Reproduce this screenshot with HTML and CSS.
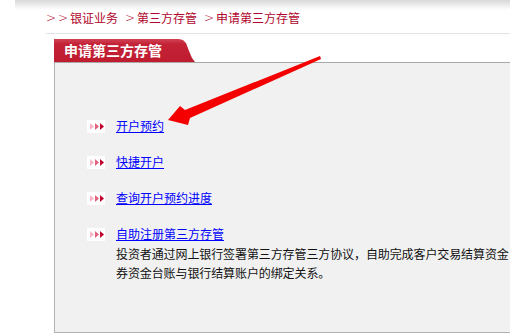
FILE: index.html
```html
<!DOCTYPE html>
<html>
<head>
<meta charset="utf-8">
<link rel="stylesheet" href="styles.css">
</head>
<body>
<div class="topbar"></div>
<div class="wrap">
  <div class="crumbs">
    <span class="chev">&gt;</span><span class="chev">&gt;</span><span class="seg">银证业务</span><span class="chev">&gt;</span><span class="seg">第三方存管</span><span class="chev">&gt;</span><span class="seg">申请第三方存管</span>
  </div>
  <div class="rule"></div>
  <div class="box">
    <div class="tab">申请第三方存管</div>
    <div class="panel">
      <ul class="list">
        <li class="item">
          <svg class="bullet" viewBox="0 0 18 13"><rect width="18" height="13" fill="#fff"/><path d="M3 3l4 3.5-4 3.5z" fill="#f6b8c6"/><path d="M8 3l4 3.5-4 3.5z" fill="#e2607e"/><path d="M13 3l4 3.5-4 3.5z" fill="#c0002a"/></svg>
          <div class="body"><a href="#">开户预约</a></div>
        </li>
        <li class="item">
          <svg class="bullet" viewBox="0 0 18 13"><rect width="18" height="13" fill="#fff"/><path d="M3 3l4 3.5-4 3.5z" fill="#f6b8c6"/><path d="M8 3l4 3.5-4 3.5z" fill="#e2607e"/><path d="M13 3l4 3.5-4 3.5z" fill="#c0002a"/></svg>
          <div class="body"><a href="#">快捷开户</a></div>
        </li>
        <li class="item">
          <svg class="bullet" viewBox="0 0 18 13"><rect width="18" height="13" fill="#fff"/><path d="M3 3l4 3.5-4 3.5z" fill="#f6b8c6"/><path d="M8 3l4 3.5-4 3.5z" fill="#e2607e"/><path d="M13 3l4 3.5-4 3.5z" fill="#c0002a"/></svg>
          <div class="body"><a href="#">查询开户预约进度</a></div>
        </li>
        <li class="item">
          <svg class="bullet" viewBox="0 0 18 13"><rect width="18" height="13" fill="#fff"/><path d="M3 3l4 3.5-4 3.5z" fill="#f6b8c6"/><path d="M8 3l4 3.5-4 3.5z" fill="#e2607e"/><path d="M13 3l4 3.5-4 3.5z" fill="#c0002a"/></svg>
          <div class="body"><a href="#">自助注册第三方存管</a>
            <p class="desc"><span class="line">投资者通过网上银行签署第三方存管三方协议，自助完成客户交易结算资金</span><span class="line">券资金台账与银行结算账户的绑定关系。</span></p>
          </div>
        </li>
      </ul>
    </div>
  </div>
</div>
<svg class="arrow" width="525" height="334" viewBox="0 0 525 334"><polygon points="168,120 180,106 185,110 320,56 321,59 190,118 188,125" fill="#f40000"/></svg>
</body>
</html>
```
FILE: styles.css
```css
html, body { margin: 0; padding: 0; background: #fff; }
body {
  width: 525px; height: 334px; overflow: hidden; position: relative;
  font-family: "Noto Sans CJK SC", "Noto Sans", sans-serif;
  font-size: 12px;
}
.topbar {
  margin-left: 15px; width: 495px; height: 10px;
  background: linear-gradient(to bottom, #d8d8d8, #f4f4f4 70%, #fff);
}
.wrap { margin-left: 46px; width: 464px; }
.crumbs {
  height: 22px; line-height: 16px; color: #b0062c;
  display: flex;
}
.crumbs .chev { font-family: "DejaVu Sans", sans-serif; font-weight: 200; width: 12px; }
.crumbs .seg { margin-right: 7px; }
.rule { height: 1px; background: #e4e4e4; margin-top: 1px; }
.box { margin-left: 8px; margin-top: 5px; }
.tab {
  width: 131px; height: 23px; line-height: 23px; padding-left: 10px;
  color: #fff; font-weight: bold; font-size: 14px;
  background: linear-gradient(to bottom, #d24456 0, #c42236 5px, #bf1c30 100%);
  clip-path: polygon(0 0, 125px 0, 129px 1px, 132px 4px, 135px 12px, 138px 19px, 141px 23px, 0 23px);
}
.panel {
  height: 269px; background: #f1f1f1;
  border-top: 1px solid #a8a8a8; border-left: 1px solid #b0b0b0; border-bottom: 1px solid #b0b0b0;
  overflow: hidden;
}
.list { list-style: none; margin: 0; padding: 55px 0 0 32px; }
.item { display: flex; align-items: flex-start; gap: 11px; margin-bottom: 20px; }
.bullet { width: 18px; height: 13px; flex: none; margin-top: 2px; }
.body { line-height: 16px; }
.body a { color: #0000ff; text-decoration: underline; }
.desc { margin: 2px 0 0; color: #111; line-height: 19px; }
.line { display: block; white-space: nowrap; letter-spacing: -0.1px; }
.arrow { position: absolute; left: 0; top: 0; pointer-events: none; }
```
